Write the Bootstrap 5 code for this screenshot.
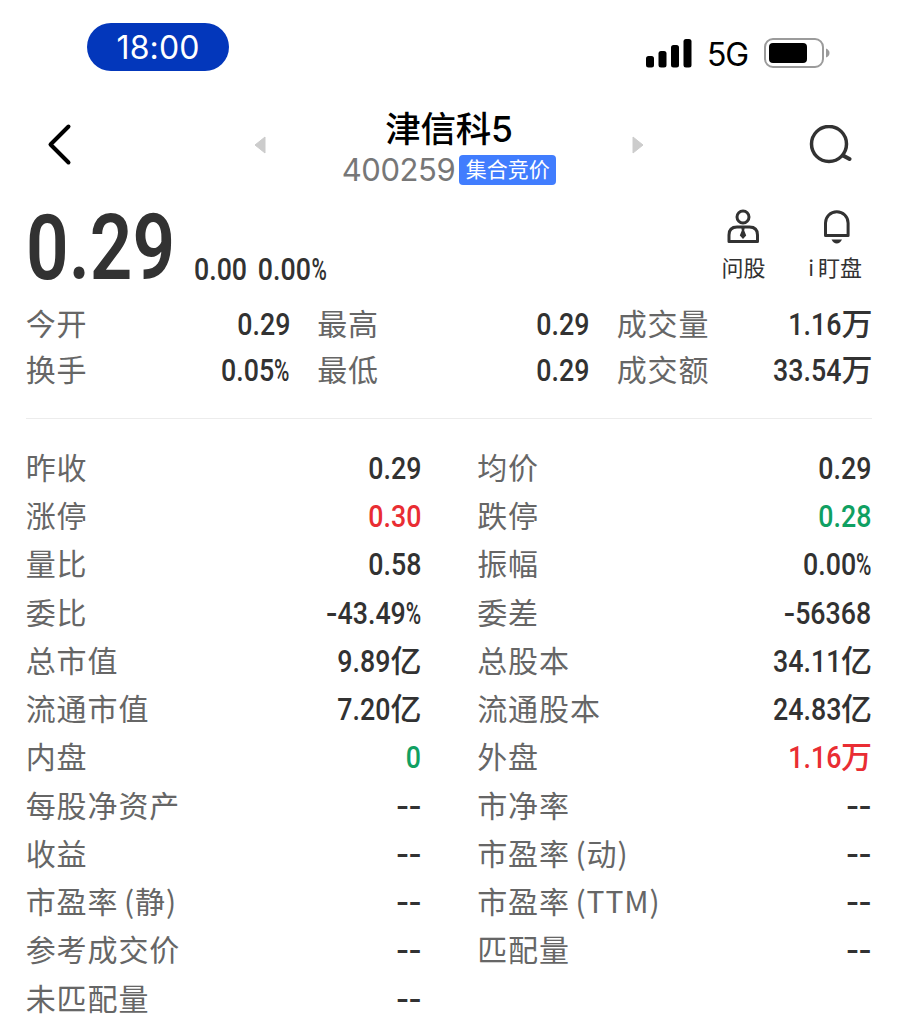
<!DOCTYPE html>
<html lang="zh-CN">
<head>
<meta charset="utf-8">
<meta name="viewport" content="width=device-width, initial-scale=1">
<title>津信科5 400259</title>
<link href="https://cdn.jsdelivr.net/npm/bootstrap@5.3.0/dist/css/bootstrap.min.css" rel="stylesheet">
<style>
body{background:#fff;color:#323232;font-family:Inter,"Noto Sans CJK SC",sans-serif;width:898px;height:1024px;overflow:hidden}
svg{display:block;flex:none}
.status{height:94px;padding:23px 68px 0 87px}
.clock{width:142px;height:48px;background:#0337bb;color:#fff;font-size:32px;line-height:49px;letter-spacing:.1px}
.signal{height:60px;gap:15px}
.net{font-size:32px;line-height:40px;color:#000;letter-spacing:-1.2px;margin:4px 0 0 -1px}
.titlebar{height:106px;padding:0 46px 5px 46px}
.switcher{width:390px;margin-left:18px}
.stock{font-size:35.5px;line-height:40px;font-weight:500;color:#000;letter-spacing:-.2px;margin-top:10px}
.code{font-size:31px;line-height:40px;color:#777;letter-spacing:-.4px}
.tag{background:#417dfe;color:#fff;font-size:21px;line-height:30px;height:30px;width:97px;border-radius:4px}
.main{padding:0 26px}
.price{height:100px}
.big{font:600 91px/97px Roboto,sans-serif;transform:scaleX(.82);transform-origin:0 50%;width:168px}
.chg{font:500 31.5px/40px Roboto,sans-serif;transform:scaleX(.85);transform-origin:0 50%;white-space:pre;margin-top:50px;word-spacing:-1.5px}
.tools{gap:43px;margin:8px 10px 0 0}
.tool{font-size:22px;line-height:28px}
.tool span{margin-top:9px;line-height:30px}
.watch{word-spacing:-2px}
.top3{display:grid;grid-template-columns:264px 272px 255px;column-gap:27.5px;grid-auto-rows:46.4px}
.two{display:grid;grid-template-columns:395px 394px;column-gap:56.5px;grid-auto-rows:48.25px}
.lbl{color:#666;font:400 30px/44px "Noto Sans CJK SC",sans-serif;letter-spacing:.9px;white-space:pre;margin-left:-.3px;word-spacing:-2px}
.val{font:500 31.5px/50px Roboto,"Noto Sans CJK SC",sans-serif;display:flex;height:46px}
.val b{font-weight:500;display:block;transform:scaleX(.85);transform-origin:100% 50%}
.pc{display:inline-block;transform:scaleX(.78);transform-origin:100% 50%;margin-left:-5px}
.val .dash{transform:scaleX(1.18)}
.neg{display:inline-block;transform:scaleX(1.25);transform-origin:100% 50%}
.val i{font:500 31px/43px "Noto Sans CJK SC",sans-serif;margin-right:-.5px}
.up{color:#e92d33}.down{color:#10a062}
.rule{height:1px;background:#ececec;margin:25px 0 25px}
</style>
<script src="https://cdn.jsdelivr.net/npm/bootstrap@5.3.0/dist/js/bootstrap.bundle.min.js"></script>
</head>
<body>
<header class="status d-flex justify-content-between align-items-start">
  <div class="clock rounded-pill text-center">18:00</div>
  <div class="signal d-flex align-items-center">
    <svg width="47" height="30" viewBox="0 0 47 30"><rect x="0" y="18" width="8" height="11.500" rx="2.500"/><rect x="12.500" y="13" width="8" height="16.500" rx="2.500"/><rect x="25" y="7" width="8" height="22.500" rx="2.500"/><rect x="37.500" y="1" width="8" height="28.500" rx="2.500"/></svg>
    <span class="net">5G</span>
    <svg width="67" height="32" viewBox="0 0 67 32"><rect x="2" y="2" width="58" height="28" rx="8" fill="none" stroke="#9b9b9b" stroke-width="2"/><rect x="6" y="6" width="38" height="20" rx="4"/><path d="M63 11.500q3.500 1.500 3.500 4.500t-3.500 4.500z" fill="#9b9b9b"/></svg>
  </div>
</header>
<nav class="titlebar d-flex align-items-center justify-content-between">
  <svg width="26" height="44" viewBox="0 0 26 44"><path d="M22.500 3.500 4.500 21.500l18 18" fill="none" stroke="#000" stroke-width="4" stroke-linecap="round" stroke-linejoin="round"/></svg>
  <div class="switcher d-flex align-items-center justify-content-between">
    <svg width="12" height="18" viewBox="0 0 12 18"><path d="M11 1v16L1 9z" fill="#ccc" stroke="#ccc" stroke-linejoin="round"/></svg>
    <div class="text-center">
      <div class="stock">津信科5</div>
      <div class="d-flex align-items-center justify-content-center gap-1"><span class="code">400259</span><span class="tag text-center">集合竞价</span></div>
    </div>
    <svg width="12" height="18" viewBox="0 0 12 18"><path d="M1 1v16L11 9z" fill="#ccc" stroke="#ccc" stroke-linejoin="round"/></svg>
  </div>
  <svg width="44" height="40" viewBox="0 0 44 40"><circle cx="21" cy="19" r="17.500" fill="none" stroke="#323232" stroke-width="3.500"/><path d="M35 30.500 41.500 34" stroke="#323232" stroke-width="4" stroke-linecap="round"/></svg>
</nav>
<main class="main">
  <section class="price d-flex align-items-start">
    <div class="big">0.29</div>
    <div class="chg">0.00  0.00<span class="pc">%</span></div>
    <div class="tools ms-auto d-flex">
      <div class="tool d-flex flex-column align-items-center">
        <svg width="34" height="36" viewBox="0 0 34 36"><g fill="none" stroke="#323232" stroke-width="3"><circle cx="17" cy="9" r="6"/><path d="M3 33.500V27q0-8 8-8h12.500q8 0 8 8v6.500z" stroke-linejoin="round"/></g><path d="M15.300 19.500h3.400l-.5 3 2 5L17 31l-3.200-3.500 2-5z" fill="#323232"/></svg>
        <span>问股</span>
      </div>
      <div class="tool d-flex flex-column align-items-center">
        <svg width="34" height="36" viewBox="0 0 34 36"><path d="M7.500 27.500V15a11.300 11.300 0 0 1 22.600 0v12.500z" fill="none" stroke="#323232" stroke-width="3" stroke-linejoin="round"/><path d="M13.500 31.500h10.500q-2 4-5.250 4t-5.250-4z" fill="#323232"/></svg>
        <span class="watch">i 盯盘</span>
      </div>
    </div>
  </section>
  <section class="top3">
    <div class="d-flex justify-content-between"><span class="lbl">今开</span><span class="val"><b>0.29</b></span></div>
    <div class="d-flex justify-content-between"><span class="lbl">最高</span><span class="val"><b>0.29</b></span></div>
    <div class="d-flex justify-content-between"><span class="lbl">成交量</span><span class="val"><b>1.16</b><i>万</i></span></div>
    <div class="d-flex justify-content-between"><span class="lbl">换手</span><span class="val"><b>0.05<span class="pc">%</span></b></span></div>
    <div class="d-flex justify-content-between"><span class="lbl">最低</span><span class="val"><b>0.29</b></span></div>
    <div class="d-flex justify-content-between"><span class="lbl">成交额</span><span class="val"><b>33.54</b><i>万</i></span></div>
  </section>
  <div class="rule"></div>
  <section class="two">
    <div class="d-flex justify-content-between"><span class="lbl">昨收</span><span class="val"><b>0.29</b></span></div>
    <div class="d-flex justify-content-between"><span class="lbl">均价</span><span class="val"><b>0.29</b></span></div>
    <div class="d-flex justify-content-between"><span class="lbl">涨停</span><span class="val up"><b>0.30</b></span></div>
    <div class="d-flex justify-content-between"><span class="lbl">跌停</span><span class="val down"><b>0.28</b></span></div>
    <div class="d-flex justify-content-between"><span class="lbl">量比</span><span class="val"><b>0.58</b></span></div>
    <div class="d-flex justify-content-between"><span class="lbl">振幅</span><span class="val"><b>0.00<span class="pc">%</span></b></span></div>
    <div class="d-flex justify-content-between"><span class="lbl">委比</span><span class="val"><b><span class="neg">-</span>43.49<span class="pc">%</span></b></span></div>
    <div class="d-flex justify-content-between"><span class="lbl">委差</span><span class="val"><b><span class="neg">-</span>56368</b></span></div>
    <div class="d-flex justify-content-between"><span class="lbl">总市值</span><span class="val"><b>9.89</b><i>亿</i></span></div>
    <div class="d-flex justify-content-between"><span class="lbl">总股本</span><span class="val"><b>34.11</b><i>亿</i></span></div>
    <div class="d-flex justify-content-between"><span class="lbl">流通市值</span><span class="val"><b>7.20</b><i>亿</i></span></div>
    <div class="d-flex justify-content-between"><span class="lbl">流通股本</span><span class="val"><b>24.83</b><i>亿</i></span></div>
    <div class="d-flex justify-content-between"><span class="lbl">内盘</span><span class="val down"><b>0</b></span></div>
    <div class="d-flex justify-content-between"><span class="lbl">外盘</span><span class="val up"><b>1.16</b><i>万</i></span></div>
    <div class="d-flex justify-content-between"><span class="lbl">每股净资产</span><span class="val"><b class="dash">--</b></span></div>
    <div class="d-flex justify-content-between"><span class="lbl">市净率</span><span class="val"><b class="dash">--</b></span></div>
    <div class="d-flex justify-content-between"><span class="lbl">收益</span><span class="val"><b class="dash">--</b></span></div>
    <div class="d-flex justify-content-between"><span class="lbl">市盈率 (动)</span><span class="val"><b class="dash">--</b></span></div>
    <div class="d-flex justify-content-between"><span class="lbl">市盈率 (静)</span><span class="val"><b class="dash">--</b></span></div>
    <div class="d-flex justify-content-between"><span class="lbl">市盈率 (TTM)</span><span class="val"><b class="dash">--</b></span></div>
    <div class="d-flex justify-content-between"><span class="lbl">参考成交价</span><span class="val"><b class="dash">--</b></span></div>
    <div class="d-flex justify-content-between"><span class="lbl">匹配量</span><span class="val"><b class="dash">--</b></span></div>
    <div class="d-flex justify-content-between"><span class="lbl">未匹配量</span><span class="val"><b class="dash">--</b></span></div>
  </section>
</main>
</body>
</html>
